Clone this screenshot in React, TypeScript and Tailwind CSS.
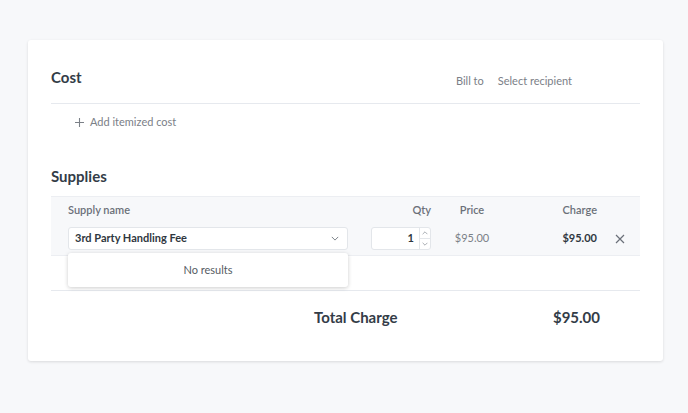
import React from 'react';

const font = { fontFamily: 'Lato, "Open Sans", sans-serif' };

const Chevron = ({ up = false, className = '' }: { up?: boolean; className?: string }) => (
  <svg viewBox="0 0 10 6" className={className} fill="none" stroke="currentColor" strokeWidth="1.2">
    {up ? <path d="M1 5l4-4 4 4" /> : <path d="M1 1l4 4 4-4" />}
  </svg>
);

export default function App() {
  return (
    <div className="min-h-screen bg-[#f7f8fa] pt-10 pl-[28px] pr-[25px] text-[#333c47]" style={font}>
      <div className="bg-white rounded-[3px] shadow-[0_1px_3px_rgba(0,0,0,0.12)] px-[23px] pb-[18px]">
        {/* Cost header */}
        <div className="flex items-end h-[64px] pb-[16px] border-b border-[#e6e9ee]">
          <h2 className="text-[15px] leading-[20px] font-bold">Cost</h2>
          <div className="ml-auto mr-[68px] flex items-center text-[11px] leading-[16px] text-[#7b8087] mb-[-2px]">
            <span>Bill to</span>
            <span className="ml-[14px]">Select recipient</span>
          </div>
        </div>
        <button className="flex items-center pl-[24px] pt-[10px] text-[11px] leading-[16px] text-[#7b8087]">
          <svg viewBox="0 0 10 10" className="w-[9px] h-[9px]" fill="none" stroke="currentColor" strokeWidth="1.2">
            <path d="M5 0v10M0 5h10" />
          </svg>
          <span className="ml-[6px]">Add itemized cost</span>
        </button>

        {/* Supplies */}
        <h2 className="mt-[36px] mb-[10px] text-[15px] leading-[20px] font-bold">Supplies</h2>
        <div className="bg-[#f7f8fa] border-y border-[#eceef2] text-[11px]">
          <div className="flex items-center h-[26px] pl-[17px] font-semibold text-[#6b7079]">
            <div className="w-[280px]">Supply name</div>
            <div className="ml-[23px] w-[60px] text-right">Qty</div>
            <div className="w-[82px] text-center">Price</div>
            <div className="w-[84px] text-right">Charge</div>
          </div>
          <div className="flex items-center pl-[17px] pt-[4px] pb-[5px]">
            <div className="relative w-[280px]">
              <div className="flex items-center h-[23px] bg-white border border-[#e3e6ea] rounded-[3px] pl-[6px] pr-[8px]">
                <span className="font-bold text-[#2f3740]">3rd Party Handling Fee</span>
                <Chevron className="ml-auto w-[8px] h-[5px] text-[#777d85]" />
              </div>
              <div className="absolute left-0 top-[26px] w-full h-[34px] z-10 bg-white rounded-[3px] shadow-[0_1px_4px_rgba(0,0,0,0.2)] flex items-center justify-center text-[#555b63]">
                No results
              </div>
            </div>
            <div className="ml-[23px] w-[60px] h-[23px] flex bg-white border border-[#e3e6ea] rounded-[3px]">
              <div className="flex-1 flex items-center justify-end pr-[5px] font-bold text-[#2f3740]">1</div>
              <div className="w-[11px] flex flex-col border-l border-[#e3e6ea] text-[#8a9097]">
                <div className="flex-1 flex items-center justify-center border-b border-[#e3e6ea]">
                  <Chevron up className="w-[6px] h-[4px]" />
                </div>
                <div className="flex-1 flex items-center justify-center">
                  <Chevron className="w-[6px] h-[4px]" />
                </div>
              </div>
            </div>
            <div className="w-[82px] text-center text-[#7b8087]">$95.00</div>
            <div className="w-[84px] text-right font-bold text-[#2f3740]">$95.00</div>
            <button className="ml-[18px] text-[#6b7079]">
              <svg viewBox="0 0 10 10" className="w-[10px] h-[10px]" fill="none" stroke="currentColor" strokeWidth="1.2">
                <path d="M1 1l8 8M9 1l-8 8" />
              </svg>
            </button>
          </div>
        </div>
        <div className="h-[35px] border-b border-[#e6e9ee]" />

        {/* Total */}
        <div className="flex items-center pt-[16px] pb-[16px] text-[15px] leading-[20px] font-bold">
          <span className="ml-[263px]">Total Charge</span>
          <span className="ml-auto mr-[40px]">$95.00</span>
        </div>
      </div>
    </div>
  );
}
